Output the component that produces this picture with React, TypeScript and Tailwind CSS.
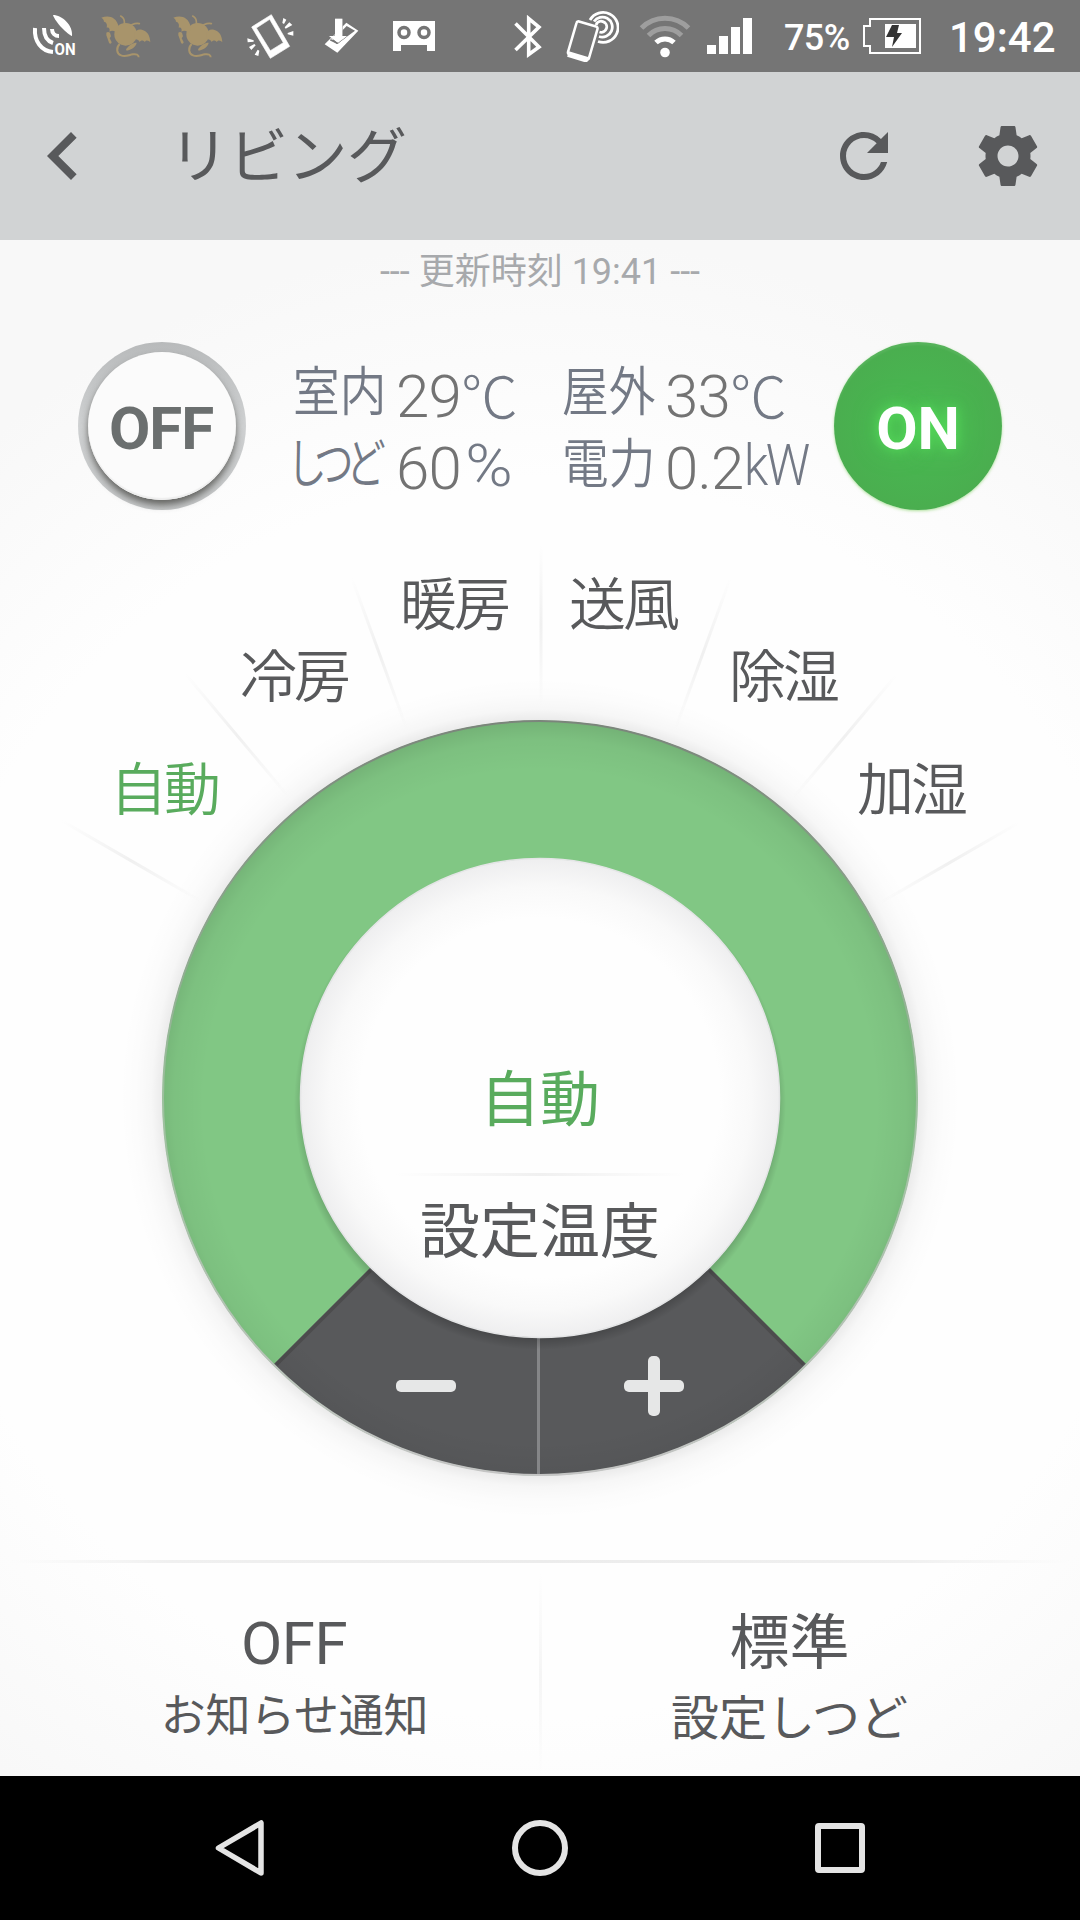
const CX = 540;
const CY = 1098;

const modes = [
  { label: "自動", place: "left-[110px] top-[222px]", active: true },
  { label: "冷房", place: "left-[240px] top-[109px]" },
  { label: "暖房", place: "left-[400px] top-[37px]" },
  { label: "送風", place: "left-[569px] top-[37px]" },
  { label: "除湿", place: "left-[729px] top-[109px]" },
  { label: "加湿", place: "left-[857px] top-[222px]" },
];

const spokes = [-60, -40, -20, 0, 20, 40, 60];

function DragonIcon() {
  return (
    <svg className="h-[44px] w-[52px]" viewBox="243 45 156 132" fill="#a8946b">
      <circle cx="317" cy="103" r="34" />
      <path d="M244 53c20-8 46-4 52 28l-4 22c-2-10-16-14-24-8 3-8-1-14-8-12 3-10-1-17-8-18 0-5-3-9-8-12z" />
      <path d="M344 100c2-8 10-14 22-11 15 4 24 16 25 38-6-7-13-8-17-1-4-6-11-6-15 0-3-6-8-9-14-8z" />
      <path d="M259 98c3-3 7-3 11 0l3 11-4 6 6 12c-1 5-6 5-8 1l-5-14-3-8zM318 148c8-12 20-20 32-20-1 10-14 21-30 24z" />
      <path d="M302 48c8 4 12 12 11 22M332 76c8-3 13-8 26-5" fill="none" stroke="#a8946b" strokeWidth="5" strokeLinecap="round" />
      <path d="M299 132c-12 12-9 29 4 34 14 6 24-2 36-3 10-1 17 0 17 9" fill="none" stroke="#a8946b" strokeWidth="6" />
    </svg>
  );
}

function StatusBar() {
  return (
    <div className="flex h-[72px] items-center bg-[#757575] font-['Roboto'] text-white">
      <svg className="ml-[32px] h-[44px] w-[46px]" viewBox="32 15 46 44" fill="none" stroke="#fff" strokeWidth="4">
        <path d="M35 29c-1 13 6 23 18 24" />
        <path d="M44 29c0 8 3 13 9 15" />
        <path d="M52 30c0 4 3 7 7 7" />
        <path d="M53 16c9 0 20 10 19 21-4-1-17-14-19-21z" fill="#fff" stroke="none" />
        <text x="54.500" y="56" fontSize="16" fontWeight="700" fill="#fff" stroke="none" textLength="21" lengthAdjust="spacingAndGlyphs">ON</text>
      </svg>
      <div className="ml-[23px] flex gap-[20px] pt-[2px]">
        <DragonIcon />
        <DragonIcon />
      </div>
      <svg className="ml-[22px] h-[45px] w-[47px]" viewBox="52 25 141 135" fill="#fff">
        <path d="M125 27l55 95-58 36-56-94zM120 41l-40 26 42 68 39-24z" fillRule="evenodd" stroke="#fff" strokeWidth="2" strokeLinejoin="round" />
        <path d="M161 37l9 5-7 13-5-3zM179 50l9 8-20 11-3-4zM191 76v14l-17-4v-4zM53 98l19 6v4l-18 2zM74 115l4 4-13 14-7-9zM84 132l5 3-3 16-11-4z" />
      </svg>
      <svg className="ml-[30px] h-[36px] w-[36px]" viewBox="283 40 108 108" fill="#fff">
        <path d="M350 54l36 24-63 66-38-25zM351 64l-43 44 14 10 54-40z" fillRule="evenodd" />
        <path d="M316 42h22v52h14l-27 22-27-22h18z" stroke="#757575" strokeWidth="2" />
        <path d="M302 105l20 10 36-33" fill="none" stroke="#757575" strokeWidth="5" />
        <path d="M316 42h22v52h14l-27 20-27-20h18z" />
      </svg>
      <svg className="ml-[32px] h-[32px] w-[44px]" viewBox="392 20 44 32">
        <path d="M393 21h42v30h-8v-6h-26v6h-8z" fill="#fff" />
        <circle cx="404" cy="32.500" r="5" fill="#fff" stroke="#757575" strokeWidth="3.500" />
        <circle cx="424" cy="32.500" r="5" fill="#fff" stroke="#757575" strokeWidth="3.500" />
      </svg>

      <svg className="ml-auto h-[44px] w-[28px]" viewBox="514 14 28 44" fill="none" stroke="#fff" strokeWidth="3.600">
        <path d="M515.500 23.500L539 47 528.700 54.500V18.500L539 27 515.500 50" />
      </svg>
      <svg className="ml-[24px] h-[52px] w-[53px]" viewBox="566 11 53 52" fill="none" stroke="#fff" strokeWidth="2.600">
        <path d="M579 22.500l17 5a2 2 0 0 1 1.500 2.500l-8.500 29a2 2 0 0 1-2.500 1.500l-17-5a2 2 0 0 1-1.500-2.500l8.500-29a2 2 0 0 1 2.500-1.500z" />
        <path d="M568 55l20 6" strokeWidth="6" />
        <path d="M590 21a15 15 0 1 1 8 21.500M594 22.500a10 10 0 1 1 5 15M596 26a5.500 5.500 0 1 1 3.500 7" strokeWidth="2.800" />
      </svg>
      <svg className="ml-[20px] h-[44px] w-[52px]" viewBox="639 14 52 44" fill="none" stroke="#fff">
        <path d="M641.500 28a33 33 0 0 1 47 0" strokeWidth="5" opacity=".3" />
        <path d="M648.500 35.500a23 23 0 0 1 33 0" strokeWidth="5" opacity=".3" />
        <path d="M656 42.500a13 13 0 0 1 18 0" strokeWidth="5" />
        <circle cx="665" cy="52.500" r="4.800" fill="#fff" stroke="none" />
      </svg>
      <svg className="ml-[16px] h-[36px] w-[46px]" viewBox="707 18 46 36" fill="#fff">
        <path d="M707 45h9v9h-9zM719 36h9v18h-9zM731 27h9v27h-9zM743 18h9v36h-9z" />
      </svg>
      <span className="ml-[31px] w-[66px] pt-[4px] text-[36px] leading-none font-medium tracking-[-0.600px]">75%</span>
      <svg className="ml-[12px] h-[38px] w-[60px]" viewBox="862 17 60 38">
        <path d="M870 19h50v34h-50v-7h-6v-20h6z" fill="none" stroke="#fff" strokeWidth="2" />
        <path d="M885 24h31v24h-31z" fill="#fff" />
        <path d="M892 25h7l-2 8h5l-10 14 2-10h-8z" fill="#333" />
      </svg>
      <span className="mr-[24px] ml-[27px] w-[107px] pt-[3px] text-[42px] leading-none font-medium">19:42</span>
    </div>
  );
}

function Header() {
  return (
    <header className="flex h-[168px] items-center bg-[#d1d3d4] text-[#58595b]">
      <svg className="ml-[15px] size-[96px]" viewBox="0 0 24 24" fill="currentColor">
        <path d="M15.410 7.410L14 6l-6 6 6 6 1.410-1.410L10.830 12z" />
      </svg>
      <h1 className="ml-[58px] pt-[4px] text-[60px] leading-none tracking-[-0.700px]">リビング</h1>
      <svg className="ml-auto size-[72px]" viewBox="0 0 24 24" fill="currentColor">
        <path d="M17.650 6.350A7.958 7.958 0 0 0 12 4c-4.420 0-7.990 3.580-7.990 8s3.570 8 7.990 8c3.730 0 6.840-2.550 7.730-6h-2.080A5.990 5.990 0 0 1 12 18c-3.310 0-6-2.690-6-6s2.690-6 6-6c1.660 0 3.140.69 4.220 1.780L13 11h7V4l-2.350 2.350z" />
      </svg>
      <svg className="mr-[36px] ml-[72px] size-[72px]" viewBox="0 0 24 24" fill="currentColor">
        <path d="M19.430 12.980c.04-.32.07-.64.07-.98s-.03-.66-.07-.98l2.110-1.650c.19-.15.24-.42.12-.64l-2-3.460c-.12-.22-.39-.3-.61-.22l-2.490 1c-.52-.4-1.080-.73-1.690-.98l-.38-2.650C14.460 2.180 14.250 2 14 2h-4c-.25 0-.46.18-.49.42l-.38 2.650c-.61.25-1.170.59-1.690.98l-2.490-1c-.23-.09-.49 0-.61.22l-2 3.460c-.13.22-.07.49.12.64l2.110 1.650c-.04.32-.07.65-.07.98s.03.66.07.98l-2.110 1.650c-.19.15-.24.42-.12.64l2 3.460c.12.22.39.3.61.22l2.490-1c.52.4 1.080.73 1.690.98l.38 2.650c.03.24.24.42.49.42h4c.25 0 .46-.18.49-.42l.38-2.650c.61-.25 1.170-.59 1.690-.98l2.490 1c.23.09.49 0 .61-.22l2-3.460c.12-.22.07-.49-.12-.64l-2.110-1.650zM12 15.500c-1.930 0-3.500-1.570-3.500-3.500s1.570-3.500 3.500-3.500 3.500 1.570 3.500 3.500-1.570 3.500-3.500 3.500z" />
      </svg>
    </header>
  );
}

type ReadingProps = {
  label: string;
  value: string;
  unit: string;
  labelStyle?: string;
  unitStyle?: string;
};

function Reading({
  label,
  value,
  unit,
  labelStyle = "scale-x-88",
  unitStyle = "pt-[9px] text-[57px]",
}: ReadingProps) {
  return (
    <div className="flex h-[72px] items-start leading-[72px] font-light whitespace-nowrap">
      <div className="w-[103px] pt-[3px] text-[53px] font-[350] text-[#737985]">
        <span className={`block w-max origin-left ${labelStyle}`}>{label}</span>
      </div>
      <span className="pt-[7px] text-[60px] tracking-[-0.800px] text-[#737373]">{value}</span>
      <span className={`origin-left text-[#737985] ${unitStyle}`}>{unit}</span>
    </div>
  );
}

function Summary() {
  return (
    <section className="flex h-[168px] items-center px-[78px]">
      <button className="flex size-[168px] items-center justify-center rounded-full bg-linear-to-b from-[#b8babb] via-[#cfd1d2] to-[#c4c6c7]">
        <span className="flex size-[148px] items-center justify-center rounded-full bg-[#fbfbfb] pt-[6px] pr-[2px] text-[60px] leading-none font-bold tracking-[-1px] text-[#6b6f6f] shadow-[0_5px_7px_rgba(60,60,55,0.7),inset_0_-2px_1px_#eeeeee]">
          OFF
        </span>
      </button>
      <div className="ml-[47px] w-[269px]">
        <Reading label="室内" value="29" unit="℃" />
        <Reading
          label="しつど"
          value="60"
          unit="%"
          labelStyle="-ml-[3px] scale-x-75 tracking-[-8px] [font-feature-settings:'palt']"
          unitStyle="scale-x-107 pl-[4px] pt-[4px] text-[60px] font-[350]"
        />
      </div>
      <div className="w-[272px]">
        <Reading label="屋外" value="33" unit="℃" />
        <Reading label="電力" value="0.2" unit="kW" unitStyle="scale-x-87 pt-[4px] text-[57px] font-[350] tracking-[-3px]" />
      </div>
      <button className="flex size-[168px] shrink-0 items-center justify-center rounded-full bg-[radial-gradient(circle,#4ab853_0%,#49b350_40%,#4aae4f_70%)] pt-[6px] text-[60px] leading-none font-bold text-white shadow-[0_1px_3px_rgba(100,200,60,0.5),inset_0_3px_2px_rgba(255,255,255,0.07)] [text-shadow:0_0_12px_#55dd5a,0_0_24px_#4fc954]">
        ON
      </button>
    </section>
  );
}

function Dial() {
  return (
    <section className="relative h-[1020px]">
      <svg className="block h-[1020px] w-[1080px]" viewBox="0 540 1080 1020">
        <defs>
          <linearGradient id="spoke" gradientUnits="userSpaceOnUse" x1="0" y1="545" x2="0" y2="705">
            <stop offset="0" stopColor="#f0f0f0" stopOpacity="0" />
            <stop offset=".5" stopColor="#f0f0f0" />
            <stop offset="1" stopColor="#f0f0f0" stopOpacity="0" />
          </linearGradient>
          <linearGradient id="rim" x1="0" y1="0" x2="0" y2="1">
            <stop offset="0" stopColor="#7b857b" />
            <stop offset=".5" stopColor="#9cc09d" />
            <stop offset="1" stopColor="#c4c4c4" />
          </linearGradient>
          <radialGradient id="halo" gradientUnits="userSpaceOnUse" cx={CX} cy={CY} r="420">
            <stop offset=".895" stopColor="#000" stopOpacity=".085" />
            <stop offset=".925" stopColor="#000" stopOpacity=".03" />
            <stop offset=".96" stopColor="#000" stopOpacity=".01" />
            <stop offset="1" stopColor="#000" stopOpacity="0" />
          </radialGradient>
          <radialGradient id="innerShade" gradientUnits="userSpaceOnUse" cx={CX} cy={CY + 8} r="386">
            <stop offset=".87" stopColor="#000" stopOpacity="0" />
            <stop offset=".95" stopColor="#000" stopOpacity=".035" />
            <stop offset="1" stopColor="#000" stopOpacity=".11" />
          </radialGradient>
          <radialGradient id="hubShadow" gradientUnits="userSpaceOnUse" cx={CX} cy={CY + 6} r="246">
            <stop offset=".94" stopColor="#000" stopOpacity=".24" />
            <stop offset="1" stopColor="#000" stopOpacity="0" />
          </radialGradient>
          <radialGradient id="hub" gradientUnits="userSpaceOnUse" cx={CX} cy={CY} r="240">
            <stop offset=".75" stopColor="#fefefe" />
            <stop offset=".88" stopColor="#f9f9f9" />
            <stop offset="1" stopColor="#eeeeef" />
          </radialGradient>
        </defs>
        {spokes.map((deg) => (
          <rect key={deg} x="539.500" y="545" width="3" height="160" fill="url(#spoke)" transform={`rotate(${deg} ${CX} ${CY})`} />
        ))}
        <circle cx={CX} cy={CY} r="420" fill="url(#halo)" />
        <circle cx={CX} cy={CY} r="377.500" fill="#81c784" />
        <path d="M540 1098L273.700 1364.300A376.600 376.600 0 0 0 806.300 1364.300z" fill="#58595b" />
        <path d="M370.500 1270.500l-94 94M709.500 1270.500l94 94" stroke="#4c4c4d" strokeWidth="3.500" />
        <circle cx={CX} cy={CY} r="377.500" fill="url(#innerShade)" />
        <circle cx={CX} cy={CY} r="377" fill="none" stroke="url(#rim)" strokeWidth="2" />
        <rect x="537" y="1330" width="3" height="144" fill="#858688" />
        <circle cx={CX} cy={CY + 6} r="246" fill="url(#hubShadow)" />
        <circle cx={CX} cy={CY} r="239.500" fill="url(#hub)" stroke="#e4e5e6" strokeWidth="1.500" />
        <g fill="#e6e7e7">
          <rect x="396" y="1380" width="60" height="12" rx="5" />
          <rect x="624" y="1380" width="60" height="12" rx="5" />
          <rect x="648" y="1356" width="12" height="60" rx="5" />
        </g>
      </svg>
      {modes.map((mode) => (
        <span
          key={mode.label}
          className={`absolute text-[57px] leading-none font-[350] tracking-[-3px] whitespace-nowrap ${mode.place} ${mode.active ? "text-[#59ab5d]" : "text-[#58595b]"}`}
        >
          {mode.label}
        </span>
      ))}
      <div className="absolute top-[318px] left-[300px] flex size-[480px] flex-col items-center pt-[213px] text-[60px] leading-none">
        <span className="text-[#59ab5d]">自動</span>
        <span className="mt-[42px] h-[3px] w-[290px] bg-linear-to-r from-transparent via-[#f0f0f0] to-transparent" />
        <span className="mt-[27px] text-[#58595b]">設定温度</span>
      </div>
    </section>
  );
}

function Footer() {
  return (
    <footer className="h-[216px] text-[#58595b]">
      <div className="mx-[10px] h-[3px] bg-[linear-gradient(90deg,transparent,#f0f0f0_15%,#ececec_50%,#f0f0f0_85%,transparent)]" />
      <div className="flex h-[213px]">
        <div className="flex w-[539px] flex-col items-center pt-[51px] pl-[50px]">
          <span className="pr-[1px] text-[60px] leading-[60px] tracking-[-0.500px]">OFF</span>
          <span className="mt-[19px] text-[45px] leading-[48px] tracking-[-0.300px]">お知らせ通知</span>
        </div>
        <div className="mt-[10px] w-[3px] bg-linear-to-b from-transparent via-[#f5f5f5] to-transparent" />
        <div className="flex w-[538px] flex-col items-center pt-[51px] pr-[43px]">
          <span className="text-[60px] leading-[60px]">標準</span>
          <span className="mt-[21px] text-[48px] leading-[48px]">設定しつど</span>
        </div>
      </div>
    </footer>
  );
}

function NavBar() {
  return (
    <nav className="flex h-[144px] items-center justify-between bg-black pr-[212px] pl-[213px]">
      <svg className="h-[60px] w-[54px]" viewBox="213 1818 54 60" fill="none" stroke="#e4e4e4" strokeWidth="5.500" strokeLinejoin="round">
        <path d="M261 1823v50l-42.500-25z" />
      </svg>
      <svg className="size-[60px]" viewBox="0 0 60 60" fill="none" stroke="#e4e4e4" strokeWidth="6">
        <circle cx="30" cy="30" r="25" />
      </svg>
      <svg className="size-[56px]" viewBox="0 0 56 56" fill="none" stroke="#e4e4e4" strokeWidth="6">
        <rect x="6" y="6" width="44" height="44" rx="1" />
      </svg>
    </nav>
  );
}

export default function App() {
  return (
    <div lang="ja" className="flex h-[1920px] w-[1080px] flex-col overflow-hidden font-['Roboto','Noto_Sans_CJK_JP',sans-serif]">
      <StatusBar />
      <Header />
      <main className="h-[1536px] bg-[radial-gradient(circle_at_540px_858px,#fefefe_620px,#fcfcfc_700px,#f8f8f8_860px)]">
        <p className="h-[102px] pt-[12px] text-center text-[36px] leading-[40px] text-[#a7a9ac]">--- 更新時刻 19:41 ---</p>
        <Summary />
        <div className="h-[30px]" />
        <Dial />
        <Footer />
      </main>
      <NavBar />
    </div>
  );
}
